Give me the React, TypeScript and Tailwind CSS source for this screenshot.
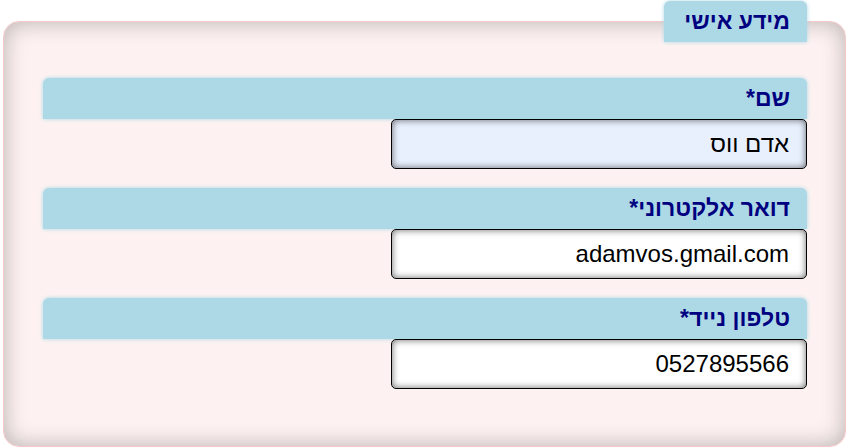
const fields = [
  { label: 'שם*', value: 'אדם ווס', autofill: true },
  { label: 'דואר אלקטרוני*', value: 'adamvos.gmail.com', autofill: false },
  { label: 'טלפון נייד*', value: '0527895566', autofill: false },
];

const App = () => {
  return (
    <div dir="rtl" className="relative w-[849px] h-[447px] bg-white px-[3px] pt-[21px]">
      {/* fieldset box */}
      <div className="h-[426px] rounded-[16px] border border-[#f3c9c9] bg-[#fdf2f1] pt-[56px] pl-[39px] pr-[38px] shadow-[inset_0_0_22px_rgba(0,0,0,0.28)]">
        {fields.map((f) => (
          <div key={f.label} className="mb-[19px]">
            <div className="h-[41px] flex items-center rounded-t-[6px] bg-[#add8e6] pr-[17px] shadow-[0_0_4px_#add8e6] font-['Liberation_Sans',Arial,sans-serif] text-[23px] font-bold text-[#000080]">
              {f.label}
            </div>
            <div
              className={`w-[416px] h-[50px] flex items-center rounded-[5px] border border-black pr-[17px] font-['Liberation_Sans',Arial,sans-serif] text-[24px] text-black shadow-[inset_0_0_7px_rgba(0,0,0,0.6)] ${
                f.autofill ? 'bg-[#e8f0fe]' : 'bg-white'
              }`}
            >
              {f.value}
            </div>
          </div>
        ))}
      </div>

      {/* legend */}
      <div className="absolute top-[1px] right-[42px] w-[143px] h-[41px] flex items-center rounded-t-[6px] bg-[#add8e6] pr-[17px] shadow-[0_0_4px_#add8e6] font-['Liberation_Sans',Arial,sans-serif] text-[23px] font-bold text-[#000080]">
        מידע אישי
      </div>
    </div>
  );
};

export default App;
